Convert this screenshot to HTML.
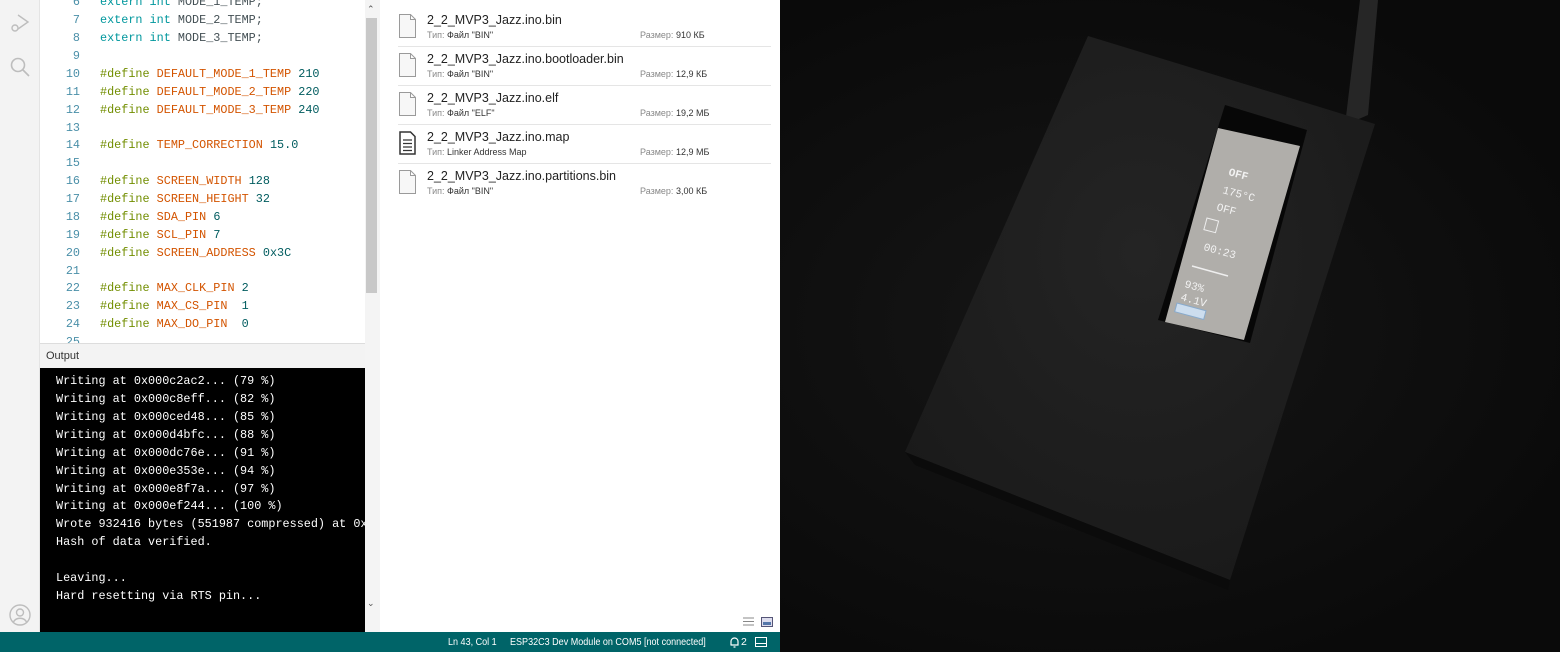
<!DOCTYPE html>
<html><head><meta charset="utf-8"><style>
*{margin:0;padding:0;box-sizing:border-box}
body{width:1560px;height:652px;overflow:hidden;position:relative;background:#fff;font-family:"Liberation Sans",sans-serif}
.abs{position:absolute}
.mono{font-family:"Liberation Mono","DejaVu Sans Mono",monospace;font-size:11.8px;white-space:pre}
#side{left:0;top:0;width:40px;height:632px;background:#f3f3f3;border-right:1px solid #e4e4e4}
#code{left:40px;top:0;width:325px;height:343px;background:#fff;overflow:hidden}
.ln{position:absolute;left:0;width:40px;text-align:right;color:#4a8fa8}
.cl{position:absolute;left:60px}
.k{color:#00979d}.p{color:#728e00}.c{color:#d35400}.n{color:#005c5f}.t{color:#434f54}
#sb{left:365px;top:0;width:15px;height:632px;background:#f4f4f4}
#thumb{left:366px;top:18px;width:11px;height:275px;background:#c8c8c8}
#outh{left:40px;top:343px;width:325px;height:25px;background:#f3f3f3;border-top:1px solid #ddd;font-size:11px;color:#333;padding:6px 0 0 6px}
#term{left:40px;top:368px;width:325px;height:264px;background:#000;color:#fff;overflow:hidden}
#term div{position:absolute;left:16px}
#status{left:0;top:632px;width:780px;height:20px;background:#006468;color:#fff;font-size:10.5px}
#status .s{transform-origin:0 0;transform:scaleX(0.86);white-space:nowrap}
.f{position:absolute;left:398px;width:373px;height:39px;border-bottom:1px solid #e5e5e5}
.f .nm{position:absolute;left:29px;top:5px;font-size:12.5px;color:#222}
.f .ty{position:absolute;left:29px;top:22px;font-size:9px;color:#888}
.f .ty b,.f .sz b{font-weight:normal;color:#333}
.f .sz{position:absolute;left:242px;top:22px;font-size:9px;color:#888}
.f svg{position:absolute;left:1px;top:6px}
#photo{left:780px;top:0;width:780px;height:652px;background:radial-gradient(ellipse at 40% 50%,#161616,#0a0a0a 80%)}
</style></head><body>
<div id="side" class="abs">
<svg class="abs" style="left:9px;top:12px" width="22" height="22" viewBox="0 0 22 22" fill="none" stroke="#bdbdbd" stroke-width="1.4"><path d="M9 3 L19 10 L9 17"/><circle cx="6" cy="16" r="3"/></svg>
<svg class="abs" style="left:9px;top:56px" width="22" height="22" viewBox="0 0 22 22" fill="none" stroke="#bdbdbd" stroke-width="1.6"><circle cx="9" cy="9" r="6.5"/><path d="M14 14 L20 20"/></svg>
<svg class="abs" style="left:8px;top:603px" width="24" height="24" viewBox="0 0 24 24" fill="none" stroke="#bdbdbd" stroke-width="1.4"><circle cx="12" cy="12" r="10"/><circle cx="12" cy="9.5" r="3.5"/><path d="M5.5 19 C8 14,16 14,18.5 19"/></svg>
</div>
<div id="code" class="abs mono">
<div class="ln" style="top:-5px">6</div><div class="cl" style="top:-5px"><span class="k">extern int</span> <span class="t">MODE_1_TEMP;</span></div>
<div class="ln" style="top:13px">7</div><div class="cl" style="top:13px"><span class="k">extern int</span> <span class="t">MODE_2_TEMP;</span></div>
<div class="ln" style="top:31px">8</div><div class="cl" style="top:31px"><span class="k">extern int</span> <span class="t">MODE_3_TEMP;</span></div>
<div class="ln" style="top:49px">9</div>
<div class="ln" style="top:67px">10</div><div class="cl" style="top:67px"><span class="p">#define</span> <span class="c">DEFAULT_MODE_1_TEMP</span> <span class="n">210</span></div>
<div class="ln" style="top:85px">11</div><div class="cl" style="top:85px"><span class="p">#define</span> <span class="c">DEFAULT_MODE_2_TEMP</span> <span class="n">220</span></div>
<div class="ln" style="top:103px">12</div><div class="cl" style="top:103px"><span class="p">#define</span> <span class="c">DEFAULT_MODE_3_TEMP</span> <span class="n">240</span></div>
<div class="ln" style="top:121px">13</div>
<div class="ln" style="top:138px">14</div><div class="cl" style="top:138px"><span class="p">#define</span> <span class="c">TEMP_CORRECTION</span> <span class="n">15.0</span></div>
<div class="ln" style="top:156px">15</div>
<div class="ln" style="top:174px">16</div><div class="cl" style="top:174px"><span class="p">#define</span> <span class="c">SCREEN_WIDTH</span> <span class="n">128</span></div>
<div class="ln" style="top:192px">17</div><div class="cl" style="top:192px"><span class="p">#define</span> <span class="c">SCREEN_HEIGHT</span> <span class="n">32</span></div>
<div class="ln" style="top:210px">18</div><div class="cl" style="top:210px"><span class="p">#define</span> <span class="c">SDA_PIN</span> <span class="n">6</span></div>
<div class="ln" style="top:228px">19</div><div class="cl" style="top:228px"><span class="p">#define</span> <span class="c">SCL_PIN</span> <span class="n">7</span></div>
<div class="ln" style="top:246px">20</div><div class="cl" style="top:246px"><span class="p">#define</span> <span class="c">SCREEN_ADDRESS</span> <span class="n">0x3C</span></div>
<div class="ln" style="top:264px">21</div>
<div class="ln" style="top:281px">22</div><div class="cl" style="top:281px"><span class="p">#define</span> <span class="c">MAX_CLK_PIN</span> <span class="n">2</span></div>
<div class="ln" style="top:299px">23</div><div class="cl" style="top:299px"><span class="p">#define</span> <span class="c">MAX_CS_PIN</span>  <span class="n">1</span></div>
<div class="ln" style="top:317px">24</div><div class="cl" style="top:317px"><span class="p">#define</span> <span class="c">MAX_DO_PIN</span>  <span class="n">0</span></div>
<div class="ln" style="top:335px">25</div>
</div>
<div id="sb" class="abs"></div><div id="thumb" class="abs"></div>
<div class="abs" style="left:367px;top:4px;font-size:9px;color:#555">&#8963;</div>
<div class="abs" style="left:367px;top:598px;font-size:9px;color:#555">&#8964;</div>
<div id="outh" class="abs">Output</div>
<div id="term" class="abs mono">
<div style="top:6px">Writing at 0x000c2ac2... (79 %)</div>
<div style="top:24px">Writing at 0x000c8eff... (82 %)</div>
<div style="top:42px">Writing at 0x000ced48... (85 %)</div>
<div style="top:60px">Writing at 0x000d4bfc... (88 %)</div>
<div style="top:78px">Writing at 0x000dc76e... (91 %)</div>
<div style="top:96px">Writing at 0x000e353e... (94 %)</div>
<div style="top:114px">Writing at 0x000e8f7a... (97 %)</div>
<div style="top:131px">Writing at 0x000ef244... (100 %)</div>
<div style="top:149px">Wrote 932416 bytes (551987 compressed) at 0x00010000</div>
<div style="top:167px">Hash of data verified.</div>
<div style="top:203px">Leaving...</div>
<div style="top:221px">Hard resetting via RTS pin...</div>
</div>

<div class="f" style="top:8px"><svg width="17" height="24" viewBox="0 0 17 24" fill="#f7f7f7" stroke="#9a9a9a"><path d="M.5 .5H11.5L16.5 5.5V23.5H.5Z M11.5 .5V5.5H16.5"/></svg><div class="nm">2_2_MVP3_Jazz.ino.bin</div><div class="ty">Тип: <b>Файл "BIN"</b></div><div class="sz">Размер: <b>910 КБ</b></div></div>
<div class="f" style="top:47px"><svg width="17" height="24" viewBox="0 0 17 24" fill="#f7f7f7" stroke="#9a9a9a"><path d="M.5 .5H11.5L16.5 5.5V23.5H.5Z M11.5 .5V5.5H16.5"/></svg><div class="nm">2_2_MVP3_Jazz.ino.bootloader.bin</div><div class="ty">Тип: <b>Файл "BIN"</b></div><div class="sz">Размер: <b>12,9 КБ</b></div></div>
<div class="f" style="top:86px"><svg width="17" height="24" viewBox="0 0 17 24" fill="#f7f7f7" stroke="#9a9a9a"><path d="M.5 .5H11.5L16.5 5.5V23.5H.5Z M11.5 .5V5.5H16.5"/></svg><div class="nm">2_2_MVP3_Jazz.ino.elf</div><div class="ty">Тип: <b>Файл "ELF"</b></div><div class="sz">Размер: <b>19,2 МБ</b></div></div>
<div class="f" style="top:125px"><svg width="17" height="24" viewBox="0 0 17 24" fill="#fff" stroke="#333" stroke-width="1.5"><path d="M1 1H11.5L16 5.5V23H1Z"/><path d="M4 9H13M4 12.5H13M4 16H13M4 19.5H13" stroke-width="1.3"/></svg><div class="nm">2_2_MVP3_Jazz.ino.map</div><div class="ty">Тип: <b>Linker Address Map</b></div><div class="sz">Размер: <b>12,9 МБ</b></div></div>
<div class="f" style="top:164px;border-bottom:none"><svg width="17" height="24" viewBox="0 0 17 24" fill="#f7f7f7" stroke="#9a9a9a"><path d="M.5 .5H11.5L16.5 5.5V23.5H.5Z M11.5 .5V5.5H16.5"/></svg><div class="nm">2_2_MVP3_Jazz.ino.partitions.bin</div><div class="ty">Тип: <b>Файл "BIN"</b></div><div class="sz">Размер: <b>3,00 КБ</b></div></div>
<svg class="abs" style="left:742px;top:617px" width="32" height="10" viewBox="0 0 32 10"><path d="M1 1H12M1 4.5H12M1 8H12" stroke="#888"/><rect x="19.5" y=".5" width="11" height="9" fill="#dde" stroke="#557"/><rect x="21" y="5" width="8" height="3" fill="#57a"/></svg>

<div id="status" class="abs">
<span class="abs s" style="left:448px;top:4px">Ln 43, Col 1</span>
<span class="abs s" style="left:510px;top:4px">ESP32C3 Dev Module on COM5 [not connected]</span>
<svg class="abs" style="left:729px;top:5px" width="11" height="11" viewBox="0 0 11 11" fill="none" stroke="#fff" stroke-width="1.2"><path d="M2 8V4.5C2 2.5 3.5 1 5.5 1S9 2.5 9 4.5V8H1.5M4.5 10H6.5"/></svg>
<span class="abs" style="left:741px;top:4px">2</span>
<svg class="abs" style="left:755px;top:5px" width="12" height="10"><rect x=".5" y=".5" width="11" height="9" fill="none" stroke="#fff"/><path d="M0 6.5H12" stroke="#fff"/></svg>
</div>

<div id="photo" class="abs">
<svg width="780" height="652" viewBox="780 0 780 652">
<defs><radialGradient id="g" cx="50%" cy="40%" r="70%"><stop offset="0" stop-color="#242424"/><stop offset="1" stop-color="#191919"/></radialGradient></defs>
<path d="M1360 0 L1378 0 L1368 115 L1345 125 Z" fill="#262626"/>
<path d="M1088 36 L1375 124 L1230 580 L905 452 Z" fill="url(#g)"/>
<path d="M905 452 L1230 580 L1228 590 L915 465 Z" fill="#0b0b0b"/>
<path d="M1225 105 L1307 130 L1250 343 L1158 320 Z" fill="#070707"/>
<path d="M1218 128 L1300 146 L1244 340 L1165 322 Z" fill="#b0aeaa"/>
<g fill="#f2f2f2" font-family="Liberation Mono,monospace" font-weight="bold" font-size="11">
<text x="1228" y="175" transform="rotate(15 1228 175)">OFF</text>
<text x="1222" y="193" font-weight="normal" transform="rotate(15 1222 193)">175°C</text>
<text x="1216" y="210" font-weight="normal" transform="rotate(15 1216 210)">OFF</text>
<text x="1203" y="250" font-weight="normal" transform="rotate(15 1203 250)">00:23</text>
<text x="1184" y="287" font-weight="normal" transform="rotate(15 1184 287)">93%</text>
<text x="1180" y="300" font-weight="normal" transform="rotate(15 1180 300)">4.1V</text>
</g>
<rect x="1207" y="218" width="12" height="12" fill="none" stroke="#eee" transform="rotate(15 1207 218)"/>
<path d="M1192 266 L1228 276" stroke="#eee" stroke-width="1.5"/>
<rect x="1177" y="303" width="30" height="9" fill="#cde" stroke="#8ac" transform="rotate(15 1177 303)"/>
</svg>
</div>
</body></html>
